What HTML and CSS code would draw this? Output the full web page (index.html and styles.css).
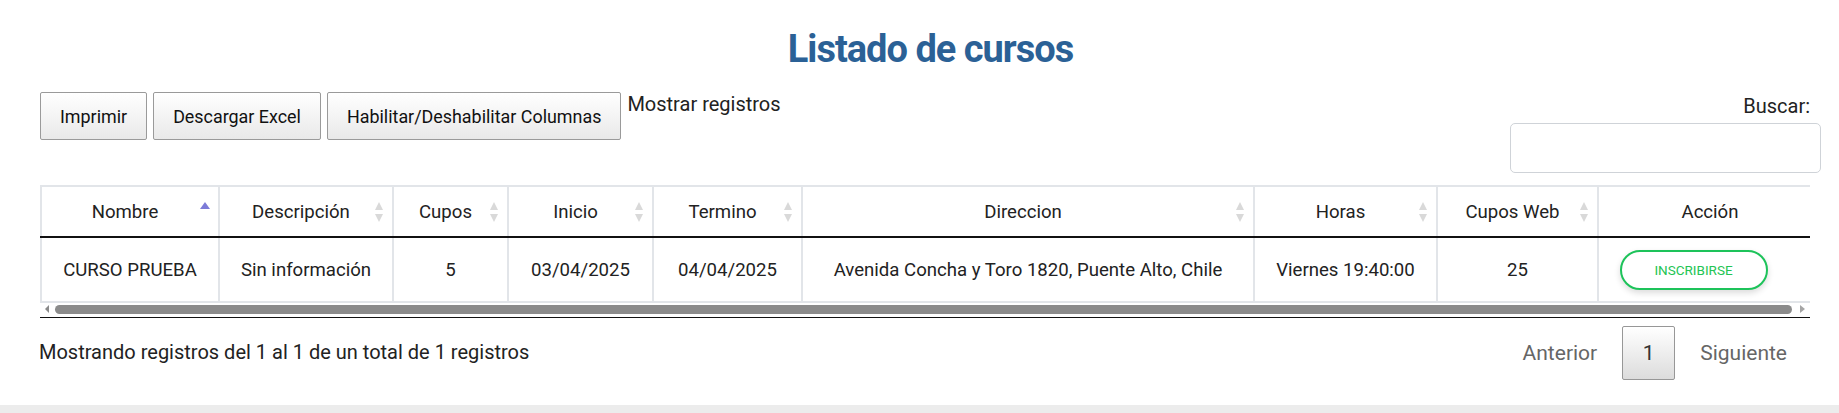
FILE: index.html
```html
<!DOCTYPE html>
<html lang="es">
<head>
<meta charset="utf-8">
<title>Listado de cursos</title>
<link rel="stylesheet" href="styles.css">
</head>
<body>
<div class="card">
  <h1 class="title">Listado de cursos</h1>
  <div class="toolbar">
    <div class="buttons">
      <button class="dt-btn">Imprimir</button>
      <button class="dt-btn">Descargar Excel</button>
      <button class="dt-btn">Habilitar/Deshabilitar Columnas</button>
    </div>
    <div class="length">Mostrar registros</div>
    <div class="filter">
      <label class="filter-label">Buscar:</label>
      <input class="filter-input" type="search">
    </div>
  </div>
  <div class="table-wrap">
    <table class="grid">
      <colgroup>
        <col class="c1"><col class="c2"><col class="c3"><col class="c4"><col class="c5"><col class="c6"><col class="c7"><col class="c8"><col class="c9">
      </colgroup>
      <thead>
        <tr>
          <th>Nombre<span class="sort asc"></span></th>
          <th>Descripción<span class="sort both"></span></th>
          <th>Cupos<span class="sort both"></span></th>
          <th>Inicio<span class="sort both"></span></th>
          <th>Termino<span class="sort both"></span></th>
          <th>Direccion<span class="sort both"></span></th>
          <th>Horas<span class="sort both"></span></th>
          <th>Cupos Web<span class="sort both"></span></th>
          <th>Acción<span class="sort both"></span></th>
        </tr>
      </thead>
      <tbody>
        <tr>
          <td>CURSO PRUEBA</td>
          <td>Sin información</td>
          <td>5</td>
          <td>03/04/2025</td>
          <td>04/04/2025</td>
          <td>Avenida Concha y Toro 1820, Puente Alto, Chile</td>
          <td>Viernes 19:40:00</td>
          <td>25</td>
          <td><button class="enroll">INSCRIBIRSE</button></td>
        </tr>
      </tbody>
    </table>
    <div class="scrollbar">
      <span class="arrow left"></span>
      <span class="thumb"></span>
      <span class="arrow right"></span>
    </div>
  </div>
  <div class="footer">
    <div class="info">Mostrando registros del 1 al 1 de un total de 1 registros</div>
    <div class="paginate">
      <span class="page-link">Anterior</span>
      <span class="page-btn">1</span>
      <span class="page-link">Siguiente</span>
    </div>
  </div>
</div>
</body>
</html>
```

FILE: styles.css
```css
* { box-sizing: border-box; }

html, body {
  margin: 0;
  padding: 0;
}

body {
  background: #ececec;
  font-family: "Roboto", "Liberation Sans", sans-serif;
  color: #222;
  font-size: 17px;
}

.card {
  background: #fff;
  height: 405px;
  padding: 0 18px 0 40px;
  box-shadow: 0 2px 4px rgba(0, 0, 0, 0.14);
}

.title {
  margin: 0;
  padding-top: 26px;
  height: 92px;
  text-align: center;
  font-size: 38px;
  line-height: 46px;
  font-weight: 700;
  color: #2b6196;
  letter-spacing: -1px;
}

.toolbar {
  display: flex;
  align-items: flex-start;
  height: 93px;
}

.buttons {
  display: flex;
  gap: 6px;
}

.dt-btn {
  height: 48px;
  padding: 0 19px;
  border: 1px solid #9a9a9a;
  border-radius: 2px;
  background: linear-gradient(to bottom, #ffffff 0%, #e9e9e9 100%);
  font-family: inherit;
  font-size: 17.9px;
  color: #111;
}

.length {
  margin-left: 6px;
  margin-top: 0;
  font-size: 20px;
  line-height: 24px;
  color: #222;
}

.filter {
  margin-left: auto;
  display: flex;
  flex-direction: column;
  align-items: flex-end;
  padding-top: 2px;
}

.filter-label {
  font-size: 20px;
  line-height: 24px;
  margin-right: 11px;
  color: #222;
}

.filter-input {
  margin-top: 5px;
  width: 311px;
  height: 50px;
  border: 1px solid #cfd3d8;
  border-radius: 5px;
  background: #fff;
}

.table-wrap {
  margin-right: 11px;
  overflow: hidden;
}

.grid {
  border-collapse: collapse;
  table-layout: fixed;
  width: 1790px;
}

.c1 { width: 178px; }
.c2 { width: 174px; }
.c3 { width: 115px; }
.c4 { width: 145px; }
.c5 { width: 149px; }
.c6 { width: 452px; }
.c7 { width: 183px; }
.c8 { width: 161px; }
.c9 { width: 233px; }

.grid th,
.grid td {
  border-left: 2px solid #e2e5e9;
  text-align: center;
  font-size: 18.6px;
  color: #222;
}

.grid th {
  position: relative;
  height: 51px;
  border-top: 2px solid #e2e5e9;
  border-bottom: 2px solid #111;
  font-weight: 400;
  padding: 0 20px 0 10px;
}

.grid td {
  height: 65px;
  border-bottom: 2px solid #e2e5e9;
  padding: 0 6px;
}

.sort {
  position: absolute;
  right: 8px;
  top: 15px;
  width: 10px;
  height: 20px;
}

.sort::before,
.sort::after {
  content: "";
  position: absolute;
  left: 1px;
  border-left: 4px solid transparent;
  border-right: 4px solid transparent;
}

.sort::before {
  top: 0;
  border-bottom: 8px solid #d9d9d9;
}

.sort::after {
  bottom: 0;
  border-top: 8px solid #d9d9d9;
}

.sort.asc::before {
  left: 0;
  border-left-width: 5px;
  border-right-width: 5px;
  border-bottom: 7px solid #7d7bd8;
}

.sort.asc::after {
  display: none;
}

.enroll {
  width: 148px;
  height: 40px;
  border: 2px solid #1dc35a;
  border-radius: 20px;
  background: #fff;
  color: #23c453;
  font-family: inherit;
  font-size: 13.5px;
  box-shadow: 0 3px 6px rgba(0, 0, 0, 0.14);
  margin-right: 43px;
}

.scrollbar {
  display: flex;
  align-items: center;
  height: 15px;
  border-bottom: 1px solid #111;
  padding: 0 5px 2px 5px;
}

.arrow {
  width: 0;
  height: 0;
  border-top: 4px solid transparent;
  border-bottom: 4px solid transparent;
}

.arrow.left {
  border-right: 4px solid #8a8a8a;
}

.arrow.right {
  border-left: 5px solid #a5a5a5;
  margin-left: 8px;
}

.thumb {
  flex: 1;
  height: 9px;
  margin-left: 6px;
  border-radius: 5px;
  background: #8b8b8b;
}

.footer {
  display: flex;
  justify-content: space-between;
  align-items: center;
  padding-top: 8px;
}

.info {
  font-size: 20px;
  color: #222;
  margin-left: -1px;
  margin-top: -3px;
}

.paginate {
  display: flex;
  align-items: center;
  gap: 25px;
  margin-right: 34px;
  font-size: 21px;
}

.page-link {
  color: #666;
}

.page-btn {
  display: flex;
  align-items: center;
  justify-content: center;
  width: 53px;
  height: 54px;
  border: 1px solid #979797;
  border-radius: 2px;
  background: linear-gradient(to bottom, #ffffff 0%, #dcdcdc 100%);
  color: #333;
}
```
